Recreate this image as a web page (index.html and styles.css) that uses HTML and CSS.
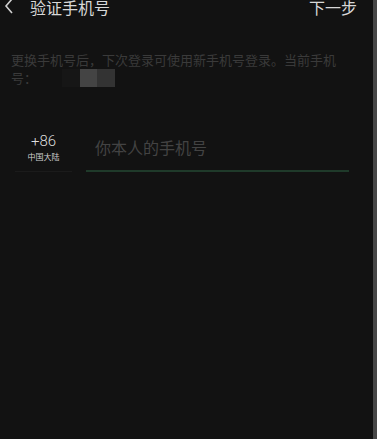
FILE: index.html
```html
<!DOCTYPE html>
<html lang="zh">
<head>
<meta charset="utf-8">
<link rel="stylesheet" href="styles.css">
</head>
<body>
<div class="page">
  <main class="main">
    <header class="header">
      <div class="left">
        <svg class="back" width="11" height="18" viewBox="0 0 11 18"><path d="M9 1 L3 8 L9 15" fill="none" stroke="#d0d0d0" stroke-width="1.6"/></svg>
        <span class="title">验证手机号</span>
      </div>
      <span class="next">下一步</span>
    </header>
    <p class="desc">更换手机号后，下次登录可使用新手机号登录。当前手机号：<span class="mask"><i class="m1"></i><i class="m2"></i><i class="m3"></i></span></p>
    <div class="phone-row">
      <div class="cc">
        <div class="code">+86</div>
        <div class="region">中国大陆</div>
      </div>
      <div class="input">你本人的手机号</div>
    </div>
  </main>
  <div class="scrollbar"></div>
</div>
</body>
</html>
```
FILE: styles.css
```css
html, body { margin: 0; padding: 0; background: #121212; }
body { font-family: "Noto Sans CJK SC", "Noto Sans", sans-serif; }
.page { display: flex; height: 439px; overflow: hidden; }
.main { flex: 1; }
.scrollbar { width: 4px; background: #474747; }
.header { display: flex; justify-content: space-between; align-items: center; margin-top: -2px; height: 18px; padding: 0 16px 0 3px; }
.left { display: flex; align-items: center; }
.back { display: block; margin-right: 16px; }
.title, .next { font-size: 16px; line-height: 18px; color: #d8d8d8; }
.desc { margin: 35px 34px 0 11px; font-size: 13px; line-height: 18px; color: #3a3a3a; }
.mask { display: inline-flex; vertical-align: top; margin-left: 25px; height: 18px; }
.mask i { display: block; width: 17.5px; height: 18px; }
.m1 { background: #161616; }
.m2 { background: #444444; }
.m3 { background: #333333; }
.phone-row { display: flex; align-items: flex-end; margin: 46px 24px 0 15px; gap: 14px; }
.cc { width: 57px; text-align: center; border-bottom: 1px solid #1b1b1b; padding-bottom: 9px; }
.code { font-family: "Roboto", "Noto Sans", sans-serif; font-weight: 300; font-size: 15px; line-height: 16px; color: #dedede; }
.region { font-size: 8px; line-height: 10px; color: #cfcfcf; margin-top: 3px; }
.input { flex: 1; border-bottom: 2px solid #1f3a2a; padding: 0 0 13px 9px; font-size: 16px; line-height: 20px; color: #434343; }
```
